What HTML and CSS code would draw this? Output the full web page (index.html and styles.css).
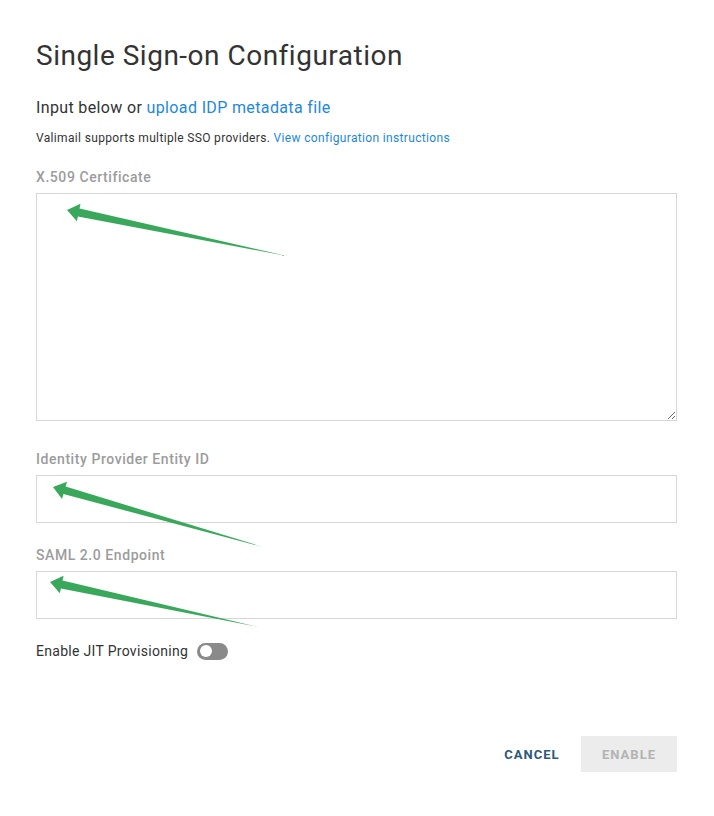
FILE: index.html
```html
<!DOCTYPE html>
<html lang="en">
<head>
<meta charset="utf-8">
<title>Single Sign-on Configuration</title>
<link rel="stylesheet" href="styles.css">
</head>
<body>
<div class="dialog">
  <h1 class="title">Single Sign-on Configuration</h1>
  <p class="intro">Input below or <a class="link" href="#">upload IDP metadata file</a></p>
  <p class="note">Valimail supports multiple SSO providers. <a class="link" href="#">View configuration instructions</a></p>

  <label class="label label-first">X.509 Certificate</label>
  <textarea class="field area"></textarea>

  <label class="label">Identity Provider Entity ID</label>
  <input class="field input" type="text">

  <label class="label label-saml">SAML 2.0 Endpoint</label>
  <input class="field input" type="text">

  <div class="jit">
    <span class="jit-text">Enable JIT Provisioning</span>
    <span class="toggle"><span class="knob"></span></span>
  </div>

  <div class="actions">
    <button class="btn btn-cancel">CANCEL</button>
    <button class="btn btn-enable">ENABLE</button>
  </div>
</div>

<svg class="arrows" width="714" height="816" viewBox="0 0 714 816">
  <polygon fill="#39a85b" points="67,210 80.5,203.7 79.5,208.6 287,256 77.9,216.4 76.9,221.3"/>
  <polygon fill="#39a85b" points="53,487 67,481.7 65.6,486.5 263,547 63.4,494.1 62,499"/>
  <polygon fill="#39a85b" points="50,582 63.6,575.7 62.5,580.6 258,627 60.9,588.4 59.8,593.3"/>
</svg>
</body>
</html>
```

FILE: styles.css
```css
html, body {
  margin: 0;
  padding: 0;
  background: #fff;
}
body {
  font-family: Roboto, "Liberation Sans", Arial, sans-serif;
  color: #333;
  position: relative;
  width: 714px;
  height: 816px;
  overflow: hidden;
}
.dialog {
  padding: 40px 37px 0 36px;
  display: flex;
  flex-direction: column;
}
.title {
  margin: 0;
  font-size: 28px;
  line-height: 32px;
  font-weight: 400;
  letter-spacing: 0.5px;
  color: #333;
}
.intro {
  margin: 26px 0 0;
  font-size: 16px;
  line-height: 20px;
  letter-spacing: 0.36px;
  color: #333;
}
.note {
  margin: 12px 0 0;
  font-size: 12px;
  line-height: 16px;
  letter-spacing: 0.34px;
  color: #333;
}
.link {
  color: #1c87df;
  text-decoration: none;
}
.label {
  display: block;
  margin-top: 30px;
  font-size: 14px;
  line-height: 16px;
  font-weight: 500;
  color: #9c9c9c;
  letter-spacing: 0.56px;
}
.label-first {
  margin-top: 23px;
}
.label-saml {
  margin-top: 24px;
}
.field {
  display: block;
  box-sizing: border-box;
  width: 641px;
  margin: 8px 0 0;
  border: 1px solid #d6d6d6;
  border-radius: 0;
  background: #fff;
  outline: none;
  font-family: inherit;
}
.area {
  height: 228px;
  resize: vertical;
}
.input {
  height: 48px;
}
.jit {
  display: flex;
  align-items: center;
  gap: 9px;
  margin-top: 22px;
  height: 20px;
}
.jit-text {
  font-size: 14px;
  line-height: 20px;
  letter-spacing: 0.3px;
  color: #333;
}
.toggle {
  display: flex;
  align-items: center;
  box-sizing: border-box;
  width: 31px;
  height: 17px;
  border-radius: 9px;
  background: #8a8a8a;
  padding-left: 3px;
}
.knob {
  width: 12px;
  height: 12px;
  border-radius: 50%;
  background: #fff;
}
.actions {
  display: flex;
  justify-content: flex-end;
  gap: 1px;
  margin-top: 75px;
}
.btn {
  box-sizing: border-box;
  min-width: 96px;
  height: 36px;
  border: none;
  border-radius: 0;
  font-family: inherit;
  font-size: 13px;
  font-weight: 700;
  letter-spacing: 1px;
  padding: 0 8px;
}
.btn-cancel {
  background: transparent;
  color: #2d5878;
}
.btn-enable {
  background: #ececec;
  color: #b3b3b3;
}
.arrows {
  position: absolute;
  left: 0;
  top: 0;
  pointer-events: none;
}
```
